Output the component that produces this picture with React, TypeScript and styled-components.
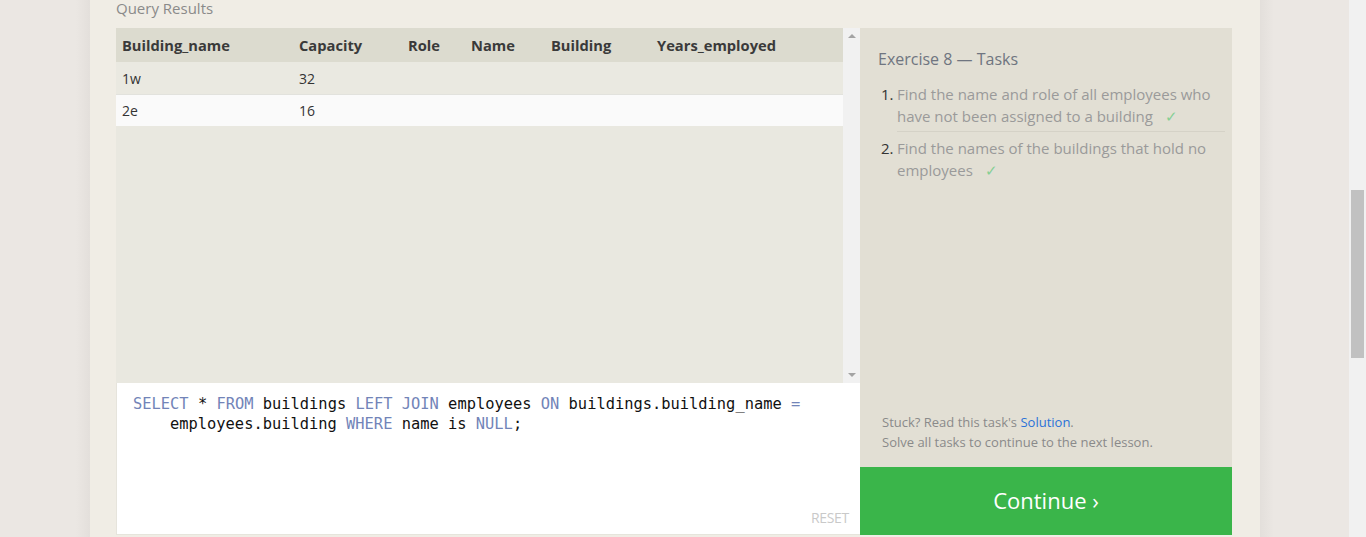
import React from "react";
import styled, { createGlobalStyle } from "styled-components";

const Global = createGlobalStyle`
  html, body { margin: 0; padding: 0; overflow: hidden; }
  body { font-family: "Open Sans", "Noto Sans", sans-serif; background: #ebe7e3; }
`;

const Page = styled.div`
  display: flex;
  width: 1366px;
  height: 537px;
  overflow: hidden;
`;

const LeftGutter = styled.div`
  width: 90px;
  flex: none;
  background: linear-gradient(to right, #ebe7e3 0px, #ebe7e3 76px, #e3dfdb 90px);
`;

const RightGutter = styled.div`
  width: 89px;
  flex: none;
  background: linear-gradient(to right, #e3dfdb 0px, #ebe7e3 14px, #ebe7e3 100%);
`;

const PageScroll = styled.div`
  width: 17px;
  flex: none;
  background: #f1f1f1;
  display: flex;
  flex-direction: column;
  padding-top: 190px;
  box-sizing: border-box;
`;

const PageThumb = styled.div`
  margin-left: 2px;
  width: 13px;
  height: 168px;
  background: #c1c1c1;
`;

const Card = styled.div`
  width: 1170px;
  flex: none;
  background: #f0ede5;
  padding: 0 28px 2px 26px;
  box-sizing: border-box;
  display: flex;
  flex-direction: column;
`;

const SectionLabel = styled.div`
  height: 30px;
  margin-top: -2px;
  font-size: 15px;
  line-height: 20px;
  color: #8a8a8a;
`;

const Workspace = styled.div`
  display: flex;
  flex: 1;
  min-height: 0;
`;

const LeftCol = styled.div`
  width: 744px;
  display: flex;
  flex-direction: column;
`;

const Results = styled.div`
  height: 355px;
  flex: none;
  display: flex;
  background: #e9e8e0;
`;

const TableWrap = styled.div`
  flex: 1;
`;

const Table = styled.table`
  border-collapse: collapse;
  width: 100%;
  table-layout: fixed;
  font-size: 14px;
  color: #333;
`;

const HeadCell = styled.th<{ $w?: number }>`
  ${(p) => (p.$w ? `width: ${p.$w}px;` : "")}
  text-align: left;
  height: 34px;
  padding: 0 0 0 6px;
  font-size: 14.7px;
  font-weight: 700;
  color: #3a3a3a;
  background: #dcdbcf;
`;

const Row = styled.tr<{ $alt?: boolean }>`
  background: ${(p) => (p.$alt ? "#fafafa" : "#eae9e1")};
  ${(p) => (p.$alt ? "box-shadow: inset 0 1px 0 #e2e2dd;" : "")}
`;

const Cell = styled.td`
  height: 32px;
  padding: 0 0 0 6px;
  color: #333;
`;

const VScroll = styled.div`
  width: 17px;
  background: #f1f1f1;
  display: flex;
  flex-direction: column;
  justify-content: space-between;
  align-items: center;
  padding: 6px 0 6px;
  box-sizing: border-box;
`;

const Arrow = styled.div<{ $down?: boolean }>`
  width: 0;
  height: 0;
  border-left: 4px solid transparent;
  border-right: 4px solid transparent;
  ${(p) => (p.$down ? "border-top: 4px solid #a3a3a3;" : "border-bottom: 4px solid #a3a3a3;")}
`;

const Editor = styled.div`
  flex: 1;
  position: relative;
  background: #fff;
  border-left: 1px solid #e6e4dc;
  border-bottom: 1px solid #e6e5dc;
  padding: 11px 16px 0 16px;
  font-family: "DejaVu Sans Mono", "Liberation Mono", monospace;
  font-size: 15.4px;
  line-height: 20px;
  color: #111;
`;

const CodeLine = styled.div<{ $indent?: boolean }>`
  white-space: pre;
  ${(p) => (p.$indent ? "padding-left: 37px;" : "")}
`;

const Kw = styled.span`
  color: #7284b8;
`;

const Reset = styled.div`
  position: absolute;
  right: 11px;
  bottom: 6px;
  font-family: "Open Sans", sans-serif;
  font-size: 14px;
  color: #c9c9c9;
  letter-spacing: -0.3px;
`;

const RightCol = styled.div`
  width: 372px;
  display: flex;
  flex-direction: column;
`;

const TaskPanel = styled.div`
  flex: 1;
  background: #e2dfd4;
  padding: 20px 7px 0 18px;
  display: flex;
  flex-direction: column;
`;

const TaskTitle = styled.div`
  font-size: 16px;
  line-height: 22px;
  color: #6f7580;
  margin-bottom: 13px;
`;

const TaskItem = styled.div`
  display: flex;
  padding: 0 0 0 3px;
  font-size: 15px;
  line-height: 22px;
  color: #9a9a9a;
`;

const TaskNum = styled.span`
  width: 16px;
  flex: none;
  color: #333;
`;

const TaskText = styled.div<{ $divider?: boolean }>`
  flex: 1;
  padding-bottom: 4px;
  margin-bottom: 5px;
  ${(p) => (p.$divider ? "border-bottom: 1px solid #d5d2c7;" : "border-bottom: 1px solid transparent;")}
`;

const Check = styled.span`
  display: inline-block;
  color: #86cf95;
  margin-left: 12px;
`;

const Hints = styled.div`
  margin-top: auto;
  padding: 0 0 15px 4px;
  font-size: 13px;
  line-height: 20px;
  color: #8a8a8a;
`;

const Link = styled.a`
  color: #2a72d8;
  text-decoration: none;
`;

const Continue = styled.button`
  height: 68px;
  flex: none;
  border: none;
  background: #3ab54a;
  color: #fff;
  font-family: "Open Sans", sans-serif;
  font-size: 22px;
  cursor: pointer;
  padding: 0 0 2px 0;
`;

export default function App() {
  return (
    <>
      <Global />
      <Page>
        <LeftGutter />
        <Card>
          <SectionLabel>Query Results</SectionLabel>
          <Workspace>
            <LeftCol>
              <Results>
                <TableWrap>
                  <Table>
                    <thead>
                      <tr>
                        <HeadCell $w={171}>Building_name</HeadCell>
                        <HeadCell $w={103}>Capacity</HeadCell>
                        <HeadCell $w={57}>Role</HeadCell>
                        <HeadCell $w={74}>Name</HeadCell>
                        <HeadCell $w={100}>Building</HeadCell>
                        <HeadCell>Years_employed</HeadCell>
                      </tr>
                    </thead>
                    <tbody>
                      <Row>
                        <Cell>1w</Cell>
                        <Cell>32</Cell>
                        <Cell />
                        <Cell />
                        <Cell />
                        <Cell />
                      </Row>
                      <Row $alt>
                        <Cell>2e</Cell>
                        <Cell>16</Cell>
                        <Cell />
                        <Cell />
                        <Cell />
                        <Cell />
                      </Row>
                    </tbody>
                  </Table>
                </TableWrap>
                <VScroll>
                  <Arrow />
                  <Arrow $down />
                </VScroll>
              </Results>
              <Editor>
                <CodeLine>
                  <Kw>SELECT</Kw> * <Kw>FROM</Kw> buildings <Kw>LEFT JOIN</Kw> employees <Kw>ON</Kw> buildings.building_name <Kw>=</Kw>
                </CodeLine>
                <CodeLine $indent>
                  employees.building <Kw>WHERE</Kw> name is <Kw>NULL</Kw>;
                </CodeLine>
                <Reset>RESET</Reset>
              </Editor>
            </LeftCol>
            <RightCol>
              <TaskPanel>
                <TaskTitle>Exercise 8 — Tasks</TaskTitle>
                <TaskItem>
                  <TaskNum>1.</TaskNum>
                  <TaskText $divider>
                    Find the name and role of all employees who have not been assigned to a building
                    <Check>✓</Check>
                  </TaskText>
                </TaskItem>
                <TaskItem>
                  <TaskNum>2.</TaskNum>
                  <TaskText>
                    Find the names of the buildings that hold no employees
                    <Check>✓</Check>
                  </TaskText>
                </TaskItem>
                <Hints>
                  Stuck? Read this task's <Link href="#">Solution</Link>.
                  <br />
                  Solve all tasks to continue to the next lesson.
                </Hints>
              </TaskPanel>
              <Continue>Continue ›</Continue>
            </RightCol>
          </Workspace>
        </Card>
        <RightGutter />
        <PageScroll>
          <PageThumb />
        </PageScroll>
      </Page>
    </>
  );
}
